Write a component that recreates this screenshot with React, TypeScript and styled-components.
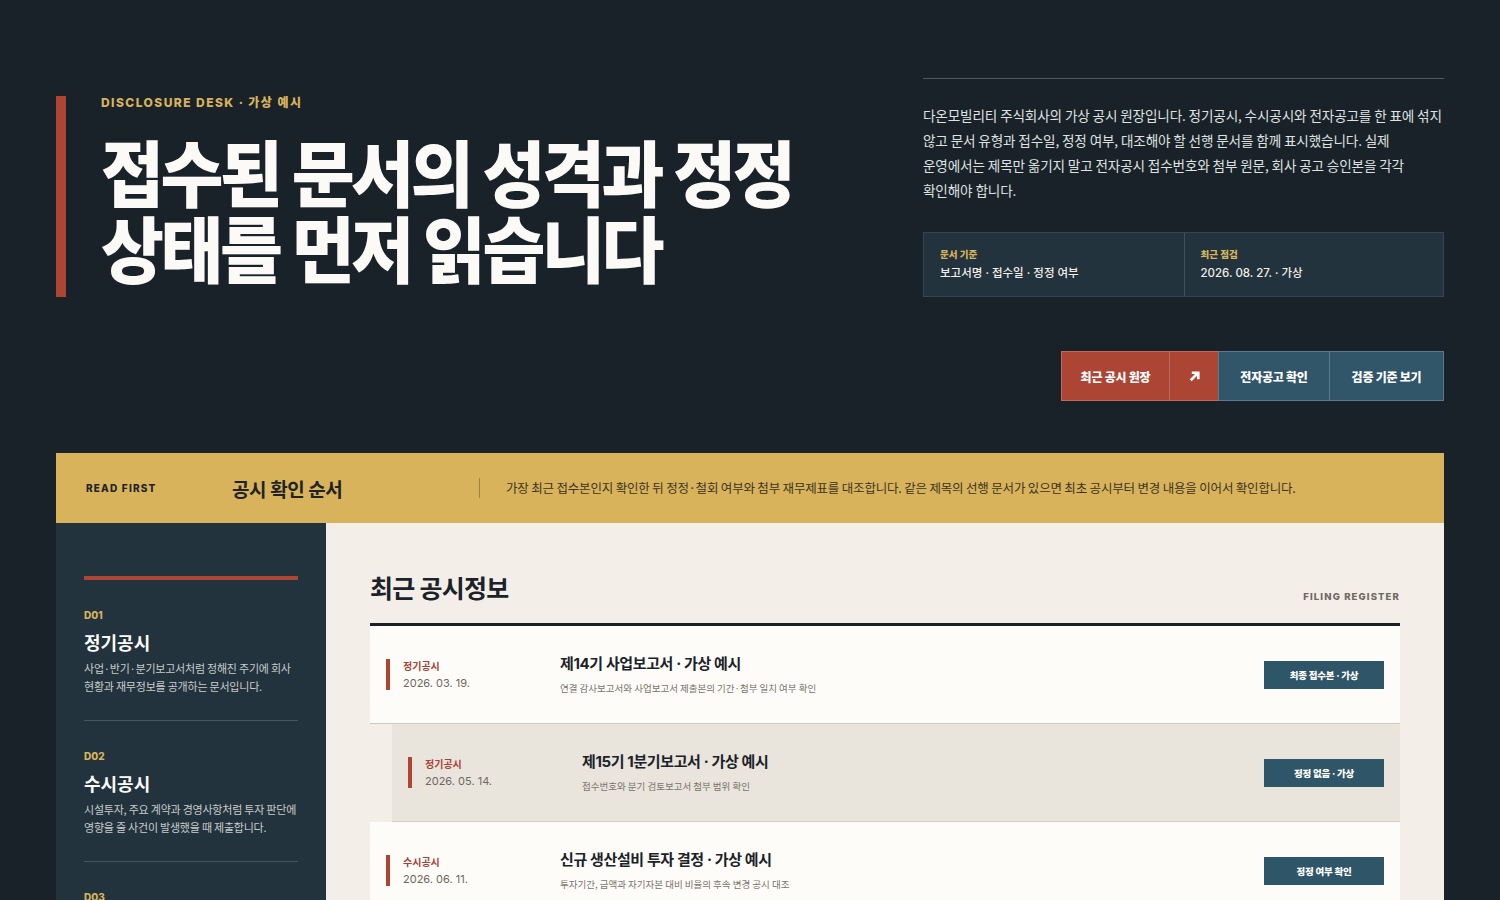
import styled, { createGlobalStyle } from 'styled-components';

const GlobalStyle = createGlobalStyle`
  * { box-sizing: border-box; }
  body {
    margin: 0;
    background: #1a2229;
    font-family: "Inter", "Noto Sans CJK KR", sans-serif;
    color: #f3efe8;
    word-break: keep-all;
  }
`;

const KR = '"Noto Sans CJK KR", "Inter", sans-serif';
const MIX = '"Inter", "Noto Sans CJK KR", sans-serif';

interface ShiftProps {
    $shift?: boolean;
}

interface ToneProps {
    $tone: 'red' | 'blue';
    $w: number;
}

const Page = styled.div`
  padding: 78px 56px 0;
`;

const Hero = styled.header`
  display: grid;
  grid-template-columns: 1fr 521px;
  align-items: end;
  gap: 40px;
`;

const HeroLeft = styled.div`
  border-left: 10px solid #ad4535;
  padding: 0 0 13px 35px;
`;

const Eyebrow = styled.div`
  font-size: 12px;
  line-height: 14px;
  font-weight: 800;
  letter-spacing: 0.12em;
  color: #d8b35c;
`;

const HeroTitle = styled.h1`
  margin: 22px 0 0;
  font-family: ${KR};
  font-size: 72px;
  line-height: 76px;
  font-weight: 900;
  letter-spacing: -0.05em;
  color: #fbfaf6;
  white-space: nowrap;
  transform: scaleX(0.95);
  transform-origin: left center;
`;

const HeroRight = styled.div`
  border-top: 1px solid #4c5c62;
  padding-top: 24px;
`;

const Lead = styled.p`
  margin: 0;
  font-family: ${KR};
  font-size: 13.6px;
  line-height: 25px;
  letter-spacing: -0.01em;
  color: #dfe2e0;
`;

const MetaGrid = styled.div`
  margin-top: 29px;
  display: grid;
  grid-template-columns: 1fr 1fr;
  background: #22333d;
  border: 1px solid #344650;
`;

const MetaCell = styled.div`
  padding: 14px 16px 15px;
  & + & { border-left: 1px solid #3e5059; }
`;

const MetaLabel = styled.div`
  font-family: ${KR};
  font-size: 9.5px;
  line-height: 14px;
  font-weight: 800;
  color: #d8b35c;
`;

const MetaValue = styled.div`
  margin-top: 4px;
  font-family: ${MIX};
  font-size: 11.5px;
  line-height: 16px;
  font-weight: 500;
  color: #f3efe8;
`;

const Actions = styled.div`
  margin-top: 54px;
  display: flex;
  justify-content: flex-end;
`;

const ActionButton = styled.button<ToneProps>`
  width: ${(p) => p.$w}px;
  height: 50px;
  padding: 0;
  border: 1px solid ${(p) => (p.$tone === 'red' ? '#c0685b' : '#587a8b')};
  margin-left: -1px;
  background: ${(p) => (p.$tone === 'red' ? '#ad4535' : '#31566a')};
  color: #fff;
  font-family: ${KR};
  font-size: 12px;
  font-weight: 800;
  letter-spacing: -0.02em;
  white-space: nowrap;
  display: flex;
  align-items: center;
  justify-content: center;
`;

const Notice = styled.section`
  margin-top: 52px;
  height: 70px;
  background: #d8b35c;
  display: grid;
  grid-template-columns: 146px 247px 1fr;
  align-items: center;
  padding-left: 30px;
  color: #1f2326;
`;

const NoticeTag = styled.div`
  font-size: 10px;
  font-weight: 800;
  letter-spacing: 0.12em;
`;

const NoticeTitle = styled.div`
  font-family: ${KR};
  font-size: 19px;
  font-weight: 700;
  letter-spacing: -0.02em;
`;

const NoticeText = styled.div`
  border-left: 1px solid #9c8245;
  padding-left: 26px;
  line-height: 20px;
  font-family: ${KR};
  font-size: 12.5px;
  letter-spacing: -0.015em;
  color: #3b3322;
`;

const Body = styled.div`
  display: grid;
  grid-template-columns: 270px 1fr;
  min-height: 400px;
`;

const Sidebar = styled.aside`
  background: #22333d;
  padding: 53px 28px 0;
`;

const SideRule = styled.div`
  height: 4px;
  background: #ad4535;
`;

const SideItem = styled.div`
  padding: 29px 0 25px;
  border-bottom: 1px solid #46565e;
`;

const SideCode = styled.div`
  font-size: 10px;
  line-height: 13px;
  font-weight: 800;
  color: #d8b35c;
`;

const SideTitle = styled.div`
  margin-top: 8px;
  font-family: ${KR};
  font-size: 18px;
  line-height: 24px;
  font-weight: 700;
  color: #fbfaf6;
`;

const SideText = styled.p`
  margin: 5px 0 0;
  font-family: ${KR};
  font-size: 11px;
  line-height: 18px;
  letter-spacing: -0.02em;
  color: #c8cdcc;
`;

const Main = styled.main`
  background: #f3efe8;
  padding: 48px 44px 0;
`;

const MainHead = styled.div`
  display: flex;
  justify-content: space-between;
  align-items: flex-end;
  padding-bottom: 20px;
  border-bottom: 3px solid #1b2126;
`;

const MainTitle = styled.h2`
  margin: 0;
  font-family: ${KR};
  font-size: 25px;
  line-height: 32px;
  font-weight: 700;
  letter-spacing: -0.03em;
  color: #1b2228;
`;

const Register = styled.div`
  font-size: 9.5px;
  font-weight: 800;
  letter-spacing: 0.12em;
  color: #6f6862;
  padding-bottom: 1px;
`;

const Row = styled.div<ShiftProps>`
  height: 98px;
  margin-left: ${(p) => (p.$shift ? '22px' : '0')};
  background: ${(p) => (p.$shift ? '#e9e4dc' : '#fdfcf9')};
  border-bottom: 1px solid #cfcac2;
  padding: 0 16px;
  display: grid;
  grid-template-columns: 174px 1fr auto;
  align-items: center;
`;

const RowMeta = styled.div`
  border-left: 4px solid #ad4535;
  padding-left: 13px;
`;

const Category = styled.div`
  font-family: ${KR};
  font-size: 10px;
  line-height: 14px;
  font-weight: 700;
  color: #a84236;
`;

const DateText = styled.div`
  margin-top: 3px;
  font-size: 11px;
  line-height: 14px;
  color: #6d6761;
`;

const RowTitle = styled.div`
  font-family: ${MIX};
  font-size: 15px;
  line-height: 20px;
  font-weight: 700;
  letter-spacing: -0.025em;
  color: #1b2228;
`;

const RowDesc = styled.div`
  margin-top: 7px;
  font-family: ${KR};
  font-size: 9.5px;
  line-height: 14px;
  color: #7a746c;
`;

const Badge = styled.div`
  width: 120px;
  height: 28px;
  background: #2f5568;
  color: #fff;
  display: flex;
  align-items: center;
  justify-content: center;
  font-family: ${MIX};
  font-size: 9.5px;
  font-weight: 800;
  letter-spacing: -0.02em;
`;

const sideItems = [
    { code: 'D01', title: '정기공시', text: '사업·반기·분기보고서처럼 정해진 주기에 회사 현황과 재무정보를 공개하는 문서입니다.' },
    { code: 'D02', title: '수시공시', text: '시설투자, 주요 계약과 경영사항처럼 투자 판단에 영향을 줄 사건이 발생했을 때 제출합니다.' },
    { code: 'D03', title: '전자공고', text: '정관에 따라 회사 홈페이지에 게시하는 공고입니다.' },
];

const filings = [
    { cat: '정기공시', date: '2026. 03. 19.', title: '제14기 사업보고서 · 가상 예시', desc: '연결 감사보고서와 사업보고서 제출본의 기간·첨부 일치 여부 확인', badge: '최종 접수본 · 가상' },
    { cat: '정기공시', date: '2026. 05. 14.', title: '제15기 1분기보고서 · 가상 예시', desc: '접수번호와 분기 검토보고서 첨부 범위 확인', badge: '정정 없음 · 가상', shift: true },
    { cat: '수시공시', date: '2026. 06. 11.', title: '신규 생산설비 투자 결정 · 가상 예시', desc: '투자기간, 금액과 자기자본 대비 비율의 후속 변경 공시 대조', badge: '정정 여부 확인' },
];

function ArrowIcon() {
    return (
        <svg width="13" height="13" viewBox="0 0 12 12" fill="none">
            <path d="M2.5 9.5L9 3M3.5 2.5h6v6" stroke="#fff" strokeWidth="2.4" strokeLinecap="butt" strokeLinejoin="miter" />
        </svg>
    );
}

export default function App() {
    return (
        <>
            <GlobalStyle />
            <Page>
                <Hero>
                    <HeroLeft>
                        <Eyebrow>DISCLOSURE DESK · 가상 예시</Eyebrow>
                        <HeroTitle>접수된 문서의 성격과 정정<br />상태를 먼저 읽습니다</HeroTitle>
                    </HeroLeft>
                    <HeroRight>
                        <Lead>
                            다온모빌리티 주식회사의 가상 공시 원장입니다. 정기공시, 수시공시와 전자공고를 한 표에 섞지
                            않고 문서 유형과 접수일, 정정 여부, 대조해야 할 선행 문서를 함께 표시했습니다. 실제
                            운영에서는 제목만 옮기지 말고 전자공시 접수번호와 첨부 원문, 회사 공고 승인본을 각각
                            확인해야 합니다.
                        </Lead>
                        <MetaGrid>
                            <MetaCell>
                                <MetaLabel>문서 기준</MetaLabel>
                                <MetaValue>보고서명 · 접수일 · 정정 여부</MetaValue>
                            </MetaCell>
                            <MetaCell>
                                <MetaLabel>최근 점검</MetaLabel>
                                <MetaValue>2026. 08. 27. · 가상</MetaValue>
                            </MetaCell>
                        </MetaGrid>
                    </HeroRight>
                </Hero>
                <Actions>
                    <ActionButton $tone="red" $w={109}>최근 공시 원장</ActionButton>
                    <ActionButton $tone="red" $w={50}><ArrowIcon /></ActionButton>
                    <ActionButton $tone="blue" $w={112}>전자공고 확인</ActionButton>
                    <ActionButton $tone="blue" $w={115}>검증 기준 보기</ActionButton>
                </Actions>
                <Notice>
                    <NoticeTag>READ FIRST</NoticeTag>
                    <NoticeTitle>공시 확인 순서</NoticeTitle>
                    <NoticeText>가장 최근 접수본인지 확인한 뒤 정정·철회 여부와 첨부 재무제표를 대조합니다. 같은 제목의 선행 문서가 있으면 최초 공시부터 변경 내용을 이어서 확인합니다.</NoticeText>
                </Notice>
                <Body>
                    <Sidebar>
                        <SideRule />
                        {sideItems.map((item) => (
                            <SideItem key={item.code}>
                                <SideCode>{item.code}</SideCode>
                                <SideTitle>{item.title}</SideTitle>
                                <SideText>{item.text}</SideText>
                            </SideItem>
                        ))}
                    </Sidebar>
                    <Main>
                        <MainHead>
                            <MainTitle>최근 공시정보</MainTitle>
                            <Register>FILING REGISTER</Register>
                        </MainHead>
                        {filings.map((f) => (
                            <Row key={f.title} $shift={f.shift}>
                                <RowMeta>
                                    <Category>{f.cat}</Category>
                                    <DateText>{f.date}</DateText>
                                </RowMeta>
                                <div>
                                    <RowTitle>{f.title}</RowTitle>
                                    <RowDesc>{f.desc}</RowDesc>
                                </div>
                                <Badge>{f.badge}</Badge>
                            </Row>
                        ))}
                    </Main>
                </Body>
            </Page>
        </>
    );
}
